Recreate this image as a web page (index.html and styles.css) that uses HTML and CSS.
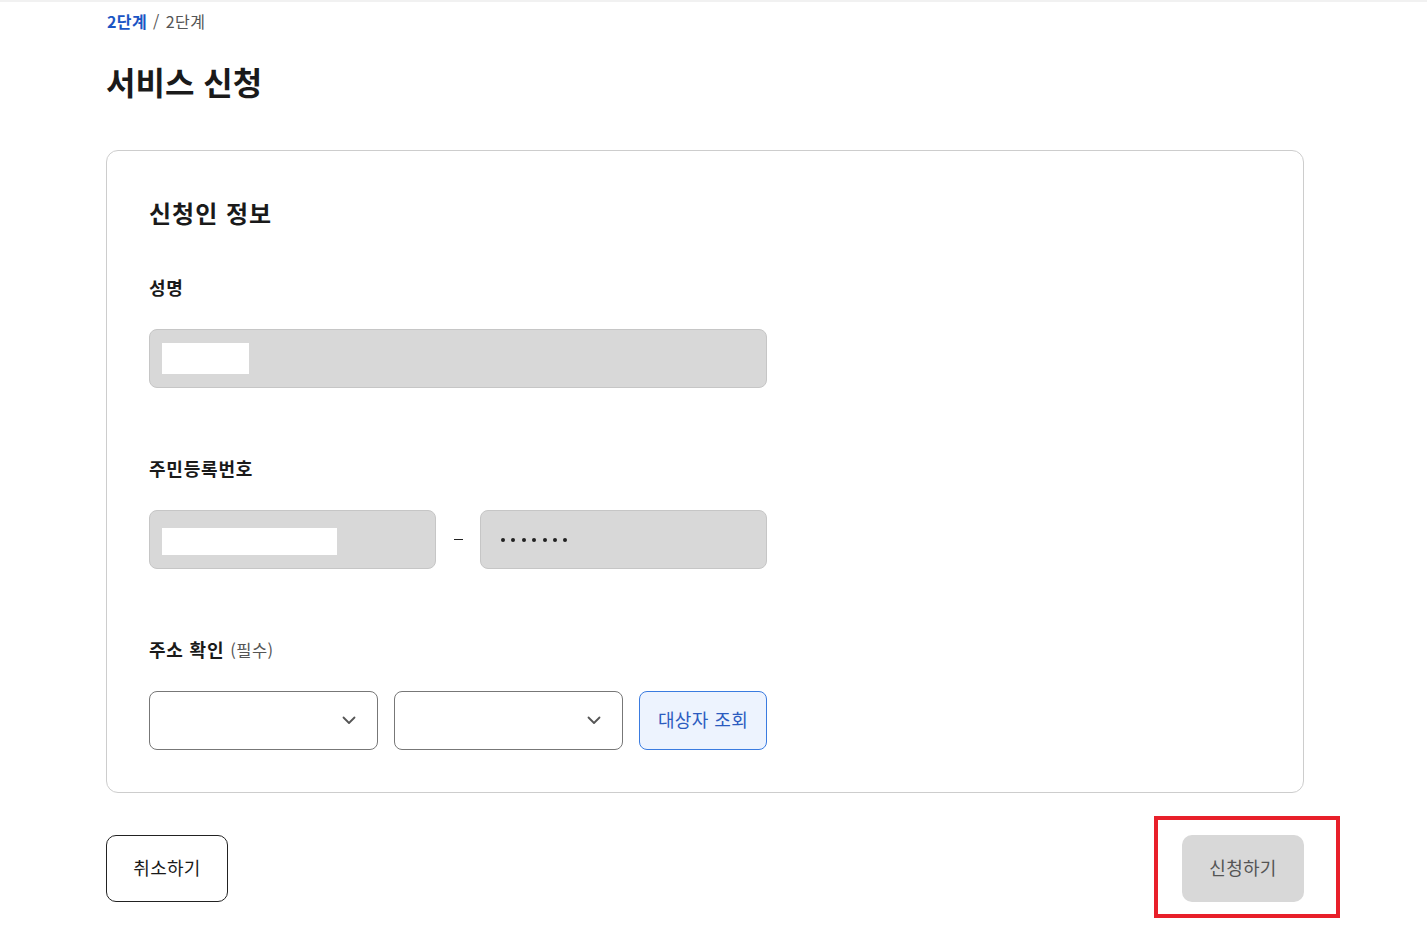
FILE: index.html
```html
<!DOCTYPE html>
<html lang="ko">
<head>
<meta charset="utf-8">
<title>서비스 신청</title>
<link rel="stylesheet" href="styles.css">
</head>
<body>
<div class="topline"></div>
<main class="page">
  <nav class="breadcrumb"><span class="crumb-current">2단계</span><span class="crumb-sep">/</span><span class="crumb">2단계</span></nav>
  <h1 class="title">서비스 신청</h1>
  <section class="card">
    <h2 class="card-title">신청인 정보</h2>
    <div class="field">
      <div class="label">성명</div>
      <div class="input input-full"><span class="mask mask-name"></span></div>
    </div>
    <div class="field">
      <div class="label">주민등록번호</div>
      <div class="row">
        <div class="input input-half"><span class="mask mask-rrn"></span></div>
        <div class="dash-wrap"><span class="dash"></span></div>
        <div class="input input-half input-pw" aria-label="•••••••"><span class="dot"></span><span class="dot"></span><span class="dot"></span><span class="dot"></span><span class="dot"></span><span class="dot"></span><span class="dot"></span></div>
      </div>
    </div>
    <div class="field">
      <div class="label">주소 확인 <span class="optional">(필수)</span></div>
      <div class="row row-gap">
        <div class="select"><svg class="chev" width="14" height="9" viewBox="0 0 14 9"><path d="M1.5 1.5 L7 7 L12.5 1.5" fill="none" stroke="#555" stroke-width="1.8" stroke-linecap="round" stroke-linejoin="round"/></svg></div>
        <div class="select"><svg class="chev" width="14" height="9" viewBox="0 0 14 9"><path d="M1.5 1.5 L7 7 L12.5 1.5" fill="none" stroke="#555" stroke-width="1.8" stroke-linecap="round" stroke-linejoin="round"/></svg></div>
        <button class="btn-lookup">대상자 조회</button>
      </div>
    </div>
  </section>
  <div class="actions">
    <button class="btn btn-cancel">취소하기</button>
    <div class="submit-wrap">
      <button class="btn btn-submit">신청하기</button>
      <div class="highlight"></div>
    </div>
  </div>
</main>
</body>
</html>
```

FILE: styles.css
```css
* { box-sizing: border-box; }
html, body { margin: 0; padding: 0; background: #fff; }
body {
  font-family: "Noto Sans CJK KR", "Noto Sans", "Liberation Sans", sans-serif;
  color: #1e1e1e;
}
.topline { height: 2px; background: #f1f1f1; }
.page {
  width: 1198px;
  margin-left: 106px;
  padding-top: 7px;
  padding-bottom: 40px;
}
.breadcrumb {
  font-size: 16px;
  line-height: 24px;
  display: flex;
  gap: 6px;
  padding-left: 1px;
  letter-spacing: 0.4px;
}
.crumb-current { color: #1b55c4; font-weight: 700; }
.crumb-sep { color: #555; }
.crumb { color: #555; }
.title {
  margin: 24px 0 0 0;
  font-size: 32px;
  line-height: 48px;
  font-weight: 700;
  color: #1a1a1a;
}
.card {
  margin-top: 45px;
  border: 1px solid #cdcdcd;
  border-radius: 12px;
  padding: 44px 42px 42px 42px;
}
.card-title {
  margin: 0;
  font-size: 24px;
  line-height: 36px;
  font-weight: 700;
  color: #1a1a1a;
  letter-spacing: 1px;
}
.field { margin-top: 43px; }
.field + .field { margin-top: 67px; }
.label {
  font-size: 18px;
  line-height: 27px;
  font-weight: 700;
  color: #1a1a1a;
  letter-spacing: 0.8px;
}
.optional { font-size: 16.5px; font-weight: 400; color: #555; letter-spacing: 0.5px; }
.input {
  margin-top: 28px;
  height: 59px;
  background: #d8d8d8;
  border: 1px solid #c6c6c6;
  border-radius: 8px;
  display: flex;
  align-items: center;
  padding-left: 12px;
}
.row .input { margin-top: 0; }
.input-full { width: 618px; }
.input-half { width: 287px; }
.input-pw { padding-left: 20px; gap: 6.4px; }
.dot {
  display: block;
  width: 4px;
  height: 4px;
  border-radius: 50%;
  background: #222;
}
.mask { display: block; background: #fff; }
.mask-name { width: 87px; height: 31px; }
.mask-rrn { width: 175px; height: 27px; margin-top: 4px; }
.row {
  margin-top: 28px;
  display: flex;
  align-items: center;
}
.dash-wrap {
  width: 44px;
  display: flex;
  justify-content: center;
}
.dash {
  display: block;
  width: 9px;
  height: 1px;
  background: #222;
}
.row-gap { gap: 16px; margin-top: 27px; }
.select {
  width: 229px;
  height: 59px;
  border: 1px solid #777;
  border-radius: 8px;
  display: flex;
  align-items: center;
  justify-content: flex-end;
  padding-right: 21px;
}
.chev { display: block; }
.btn-lookup {
  width: 128px;
  height: 59px;
  border: 1px solid #3a7be0;
  border-radius: 8px;
  background: #edf3fe;
  color: #2c5bc0;
  font-family: inherit;
  font-size: 18px;
  letter-spacing: 0.4px;
  padding: 0 0 3px 0;
}
.actions {
  margin-top: 42px;
  display: flex;
  justify-content: space-between;
  align-items: flex-start;
}
.btn {
  width: 122px;
  height: 67px;
  border-radius: 10px;
  font-family: inherit;
  font-size: 18px;
  letter-spacing: 0.3px;
  padding: 0 0 3px 0;
}
.btn-cancel {
  background: #fff;
  border: 1px solid #222;
  color: #1a1a1a;
}
.submit-wrap { position: relative; }
.btn-submit {
  background: #d8d8d8;
  border: none;
  color: #555;
}
.highlight {
  position: absolute;
  left: -28px;
  top: -19px;
  width: 186px;
  height: 102px;
  border: 4px solid #e8202a;
  pointer-events: none;
}
```
